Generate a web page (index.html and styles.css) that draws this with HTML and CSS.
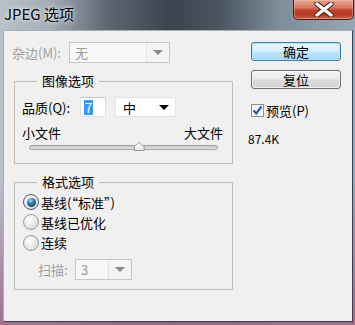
FILE: index.html
```html
<!DOCTYPE html>
<html lang="zh-CN">
<head>
  <meta charset="UTF-8">
  <title>JPEG 选项</title>
  <link rel="stylesheet" href="styles.css">
</head>
<body>
  <div class="window">
    <div class="titlebar">
      <span class="title">JPEG 选项</span>
      <span class="close">
        <svg width="22" height="15" viewBox="0 0 22 15">
          <path d="M4 2 L18 13 M18 2 L4 13" stroke="#4a1e18" stroke-width="5.4" stroke-linecap="round"/>
          <path d="M4 2 L18 13 M18 2 L4 13" stroke="#ffffff" stroke-width="3.4" stroke-linecap="round"/>
        </svg>
      </span>
    </div>

    <div class="client">
      <div class="left">
        <div class="matte-row">
          <span class="matte-label dim">杂边(M):</span>
          <span class="combo disabled matte-combo">
            <span class="combo-text">无</span>
            <span class="combo-arrow"></span>
          </span>
        </div>

        <fieldset class="group image-group">
          <legend>图像选项</legend>
          <div class="quality-row">
            <span class="quality-label">品质(Q):</span>
            <span class="textbox"><span class="selected">7</span></span>
            <span class="combo quality-combo">
              <span class="combo-text">中</span>
              <span class="combo-arrow dark"></span>
            </span>
          </div>
          <div class="size-labels">
            <span>小文件</span>
            <span>大文件</span>
          </div>
          <div class="slider">
            <div class="track"></div>
            <div class="thumb" style="left: 58%"></div>
          </div>
        </fieldset>

        <fieldset class="group format-group">
          <legend>格式选项</legend>
          <label class="radio-row">
            <span class="radio checked"></span>
            <span>基线(“标准”)</span>
          </label>
          <label class="radio-row">
            <span class="radio"></span>
            <span>基线已优化</span>
          </label>
          <label class="radio-row">
            <span class="radio"></span>
            <span>连续</span>
          </label>
          <div class="scan-row">
            <span class="scan-label dim">扫描:</span>
            <span class="combo disabled scan-combo">
              <span class="combo-text">3</span>
              <span class="combo-arrow"></span>
            </span>
          </div>
        </fieldset>
      </div>

      <div class="right">
        <button class="btn default">确定</button>
        <button class="btn">复位</button>
        <label class="check-row">
          <span class="checkbox">
            <svg width="11" height="11" viewBox="0 0 11 11">
              <path d="M1.5 5.5 L4.2 8.5 L9.5 1.5" fill="none" stroke="#2a5aa8" stroke-width="2.2"/>
            </svg>
          </span>
          <span>预览(P)</span>
        </label>
        <div class="filesize">87.4K</div>
      </div>
    </div>
  </div>
</body>
</html>
```

FILE: styles.css
```css
* {
  box-sizing: border-box;
}

body {
  margin: 0;
  font-family: "Noto Sans CJK SC", "Noto Sans", sans-serif;
  font-size: 13px;
  color: #000;
}

.window {
  width: 355px;
  height: 325px;
  display: flex;
  flex-direction: column;
  background:
    linear-gradient(to bottom, rgba(160, 104, 134, 0) 55%, rgba(160, 104, 134, 0.9) 100%),
    linear-gradient(to right, #b9c1c9 0%, #a3adb7 14%, #5d6873 30%, #3a444e 48%, #4a5560 62%, #7d8c99 78%, #96a6b4 100%);
}

.titlebar {
  height: 30px;
  display: flex;
  justify-content: space-between;
  align-items: flex-start;
}

.title {
  padding: 4px 0 0 4px;
  font-size: 15px;
  line-height: 20px;
  color: #000;
  text-shadow: 0 0 6px rgba(255, 255, 255, 0.8), 0 0 3px rgba(255, 255, 255, 0.7);
}

.close {
  width: 61px;
  height: 20px;
  margin-right: 1px;
  display: flex;
  align-items: center;
  justify-content: center;
  border: 1px solid #4b1d17;
  border-top: none;
  border-radius: 0 0 5px 5px;
  background: linear-gradient(to bottom, #e6a796 0%, #d7775f 40%, #c2412a 55%, #b93a25 80%, #d26a4a 100%);
  box-shadow: inset 0 0 0 1px rgba(255, 200, 180, 0.4);
}

.client {
  flex: 1;
  margin: 0 2px 3px 3px;
  padding: 11px 0 0 10px;
  display: flex;
  background: #f0f0f0;
  border: 1px solid #a6b0ba;
  border-right-color: #3c3f4c;
  border-bottom-color: #3c3f4c;
}

.left {
  width: 219px;
}

.dim {
  color: #a0a0a0;
}

.matte-row {
  height: 21px;
  display: flex;
  align-items: center;
}

.matte-label {
  width: 57px;
  margin-left: -2px;
}

/* combo boxes */
.combo {
  height: 100%;
  display: flex;
  align-items: stretch;
  border: 1px solid #b8b8b8;
  background: #fff;
}

.combo.disabled {
  border-color: #c6c6c6;
  background: #f4f4f4;
}

.combo-text {
  flex: 1;
  padding-left: 5px;
  display: flex;
  align-items: center;
}

.combo.disabled .combo-text {
  color: #9a9a9a;
  border-right: 1px solid #e2e2e2;
  background: #f7f7f7;
}

.combo-arrow {
  width: 22px;
  display: flex;
  align-items: center;
  justify-content: center;
}

.combo-arrow::after {
  content: "";
  border-left: 5px solid transparent;
  border-right: 5px solid transparent;
  border-top: 5px solid #8a8a8a;
}

.combo-arrow.dark::after {
  border-top-color: #000;
}

.matte-combo {
  width: 101px;
}

/* group boxes */
.group {
  margin: 0;
  min-width: 0;
  border: 1px solid #bdbdbd;
}

.group legend {
  margin-left: 15px;
  padding: 0 5px;
  line-height: 16px;
}

.image-group {
  margin-top: 10px;
  padding: 8px 9px 10px 7px;
}

.quality-row {
  height: 20px;
  display: flex;
  align-items: center;
}

.quality-label {
  width: 58px;
}

.textbox {
  width: 26px;
  height: 100%;
  padding-left: 3px;
  display: flex;
  align-items: center;
  background: #fff;
  border: 1px solid #e0e0e0;
  border-top-color: #c8c8c8;
}

.selected {
  padding: 0 1px;
  line-height: 15px;
  background: #3399ff;
  color: #fff;
}

.quality-combo {
  width: 61px;
  margin-left: 9px;
  border-color: #e3e3e3;
}

.quality-combo .combo-text {
  padding-left: 7px;
}

.size-labels {
  margin-top: 8px;
  line-height: 16px;
  display: flex;
  justify-content: space-between;
}

.slider {
  position: relative;
  height: 12px;
  margin: 0 5px 0 7px;
}

.track {
  position: absolute;
  left: 0;
  right: 0;
  top: 4px;
  height: 5px;
  border-radius: 3px;
  border: 1px solid #a4a4a4;
  background: linear-gradient(to bottom, #c8c8c8, #e2e2e2);
}

.thumb {
  position: absolute;
  top: 1px;
  width: 11px;
  height: 9px;
  margin-left: -5px;
  background: #9a9a9a;
  clip-path: polygon(50% 0, 100% 50%, 100% 100%, 0 100%, 0 50%);
}

.thumb::after {
  content: "";
  position: absolute;
  inset: 1px;
  background: linear-gradient(to bottom, #ffffff, #e4e4e4);
  clip-path: polygon(50% 0, 100% 50%, 100% 100%, 0 100%, 0 50%);
}

.format-group {
  margin-top: 10px;
  padding: 2px 9px 9px 7px;
}

.radio-row {
  height: 20px;
  display: flex;
  align-items: center;
  gap: 2px;
}

.radio-row:nth-of-type(3) {
  height: 21px;
}

.radio {
  width: 16px;
  height: 16px;
  margin-left: 1px;
  border-radius: 50%;
  border: 1px solid #9c9c9c;
  background: radial-gradient(circle at 40% 35%, #ffffff 0%, #e8e8e8 50%, #cfcfcf 100%);
  display: flex;
  align-items: center;
  justify-content: center;
}

.radio.checked {
  border-color: #4d5d6c;
}

.radio.checked::after {
  content: "";
  width: 9px;
  height: 9px;
  border-radius: 50%;
  background: radial-gradient(circle at 40% 30%, #9fdcf5 0%, #2b7aa8 40%, #0b2f4e 100%);
}

.scan-row {
  height: 21px;
  margin-top: 6px;
  display: flex;
  align-items: center;
}

.scan-label {
  width: 37px;
  margin-left: 16px;
}

.scan-combo {
  width: 57px;
}

/* right column */
.right {
  width: 90px;
  margin-left: 18px;
  display: flex;
  flex-direction: column;
}

.btn {
  height: 19px;
  padding: 0;
  font-family: inherit;
  font-size: 13px;
  line-height: 15px;
  color: #000;
  border: 1px solid #707070;
  border-radius: 3px;
  background: linear-gradient(to bottom, #f2f2f2 0%, #ebebeb 48%, #dddddd 52%, #cfcfcf 100%);
  box-shadow: inset 0 0 0 1px rgba(255, 255, 255, 0.7);
}

.btn.default {
  border-color: #3c7fb1;
  background: linear-gradient(to bottom, #eaf6fd 0%, #d9f0fc 48%, #bee6fd 52%, #a7d9f5 100%);
  box-shadow: inset 0 0 0 1px #b7e2f8;
}

.btn + .btn {
  margin-top: 9px;
}

.check-row {
  margin-top: 15px;
  height: 13px;
  display: flex;
  align-items: center;
  gap: 2px;
}

.checkbox {
  width: 13px;
  height: 13px;
  border: 1px solid #8e8f8f;
  background: linear-gradient(to bottom, #f4f4f4, #ffffff);
  display: flex;
  align-items: center;
  justify-content: center;
}

.filesize {
  margin-top: 14px;
  margin-left: -3px;
  font-size: 12px;
  line-height: 16px;
}
```
